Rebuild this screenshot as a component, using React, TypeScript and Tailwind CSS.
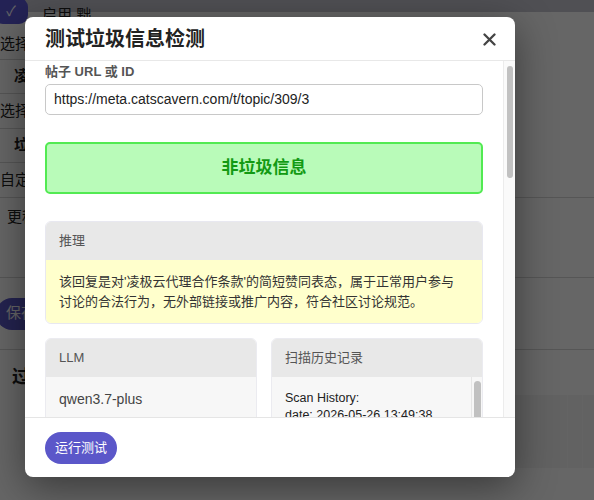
import React from "react";

const FONT = { fontFamily: '"Liberation Sans", "Noto Sans CJK SC", Arial, sans-serif' };

function Background() {
  return (
    <div className="w-[594px] h-[500px] bg-white text-[#222] text-[14px] overflow-hidden flex flex-col whitespace-nowrap">
      <div className="h-[30px] bg-[linear-gradient(#c8c9d2_0_12px,white_12px)] flex items-start">
        <div className="ml-[-6px] mt-[-2px] w-[34px] h-[26px] rounded-[9px] bg-[#5b57d8] flex items-center justify-center text-white text-[14px]">✓</div>
        <span className="ml-[14px] mt-[4px] text-[15px]">启用 黜</span>
      </div>
      <div className="h-[30px] flex items-center text-[15px] border-b border-[#d6d6d6] w-[60px] overflow-hidden">选择选择</div>
      <div className="h-[34px] flex items-center pl-[14px] font-bold text-[15px] border-b border-[#d6d6d6] w-[60px] overflow-hidden">凌极云代</div>
      <div className="h-[35px] flex items-center text-[15px] border-b border-[#d6d6d6] w-[60px] overflow-hidden">选择选择</div>
      <div className="h-[34px] flex items-center pl-[14px] font-bold text-[15px] border-b border-[#d6d6d6] w-[60px] overflow-hidden">垃圾信息</div>
      <div className="h-[35px] flex items-center text-[15px] border-b border-[#d6d6d6]">自定义</div>
      <div className="h-[80px] pl-[7px] pt-[8px] text-[15px] border-b border-[#d6d6d6]">更种</div>
      <div className="h-[72px] flex items-center border-b border-[#d6d6d6]">
        <div className="ml-[-4px] h-[32px] px-[10px] rounded-full bg-[#5b57c9] text-white text-[15px] flex items-center">保存设置</div>
      </div>
      <div className="pl-[12px] pt-[14px] font-bold text-[18px]">过滤</div>
      <div className="mt-[4px] ml-[515px] w-[79px] h-[73px] bg-[#f6f6f6] flex">
        <div className="w-[53px] border-r border-[#f9f9f9]" />
        <div className="w-[15px] border-r border-[#f9f9f9]" />
      </div>
    </div>
  );
}

function Modal() {
  return (
    <div className="absolute left-[25px] top-[17px] w-[490px] h-[460px] bg-white rounded-[8px] shadow-[0_10px_40px_rgba(0,0,0,0.45)] flex flex-col overflow-hidden">
      <div className="h-[44px] shrink-0 flex items-center justify-between pl-[20px] pr-[19px] border-b border-[#e8e8e8]">
        <span className="text-[20px] font-bold text-[#222] leading-none">测试垃圾信息检测</span>
        <svg width="13" height="13" viewBox="0 0 13 13" className="mt-[1px]">
          <path d="M1.5 1.5 L11.5 11.5 M11.5 1.5 L1.5 11.5" stroke="#444" strokeWidth="2.3" strokeLinecap="round" />
        </svg>
      </div>
      <div className="flex-1 flex overflow-hidden">
        <div className="flex-1 px-[20px] pt-[1px] overflow-hidden">
          <div className="text-[13px] font-bold text-[#555] leading-[20px]">帖子 URL 或 ID</div>
          <div className="mt-[2px] h-[31px] rounded-[5px] border border-[#c8c8c8] flex items-center px-[8px] text-[14px] text-[#222]">
            https://meta.catscavern.com/t/topic/309/3
          </div>
          <div className="mt-[27px] h-[52px] rounded-[5px] border-2 border-[#52ea52] bg-[#b9fbb9] flex items-center justify-center text-[17px] font-bold text-[#139a13]">
            非垃圾信息
          </div>
          <div className="mt-[27px] rounded-[6px] border border-[#e8e8f0] overflow-hidden">
            <div className="h-[38px] bg-[#e8e8e8] flex items-center px-[13px] text-[13px] text-[#555]">推理</div>
            <div className="bg-[#ffffcc] pl-[13px] pr-[24px] pt-[12px] pb-[11px] text-[13px] leading-[20px] text-[#333]">
              该回复是对'凌极云代理合作条款'的简短赞同表态，属于正常用户参与讨论的合法行为，无外部链接或推广内容，符合社区讨论规范。
            </div>
          </div>
          <div className="mt-[14px] grid grid-cols-2 gap-[14px]">
            <div className="rounded-[6px] border border-[#ebebf0] overflow-hidden">
              <div className="h-[38px] bg-[#e8e8e8] flex items-center px-[13px] text-[13px] text-[#555]">LLM</div>
              <div className="bg-[#f7f7f7] h-[80px] px-[13px] pt-[12px] text-[14px] leading-[20px] text-[#444]">qwen3.7-plus</div>
            </div>
            <div className="rounded-[6px] border border-[#ebebf0] overflow-hidden">
              <div className="h-[38px] bg-[#e8e8e8] flex items-center px-[13px] text-[13px] text-[#555]">扫描历史记录</div>
              <div className="bg-[#f7f7f7] h-[80px] flex">
                <div className="flex-1 px-[13px] pt-[13px] text-[12.5px] leading-[17px] text-[#222] whitespace-pre">
                  {"Scan History:\ndate: 2026-05-26 13:49:38"}
                </div>
                <div className="w-[11px] border-l border-[#e6e6e6] pt-[4px] flex justify-center">
                  <div className="w-[7px] h-[60px] rounded-full bg-[#c1c1c1]" />
                </div>
              </div>
            </div>
          </div>
        </div>
        <div className="w-[12px] shrink-0 border-l border-[#ececec] bg-[#fafafa] pt-[5px] flex justify-center">
          <div className="w-[6px] h-[112px] rounded-full bg-[#c1c1c1]" />
        </div>
      </div>
      <div className="h-[60px] shrink-0 border-t border-[#e5e5e5] flex items-center px-[20px]">
        <div className="h-[32px] px-[10px] rounded-full bg-[#5b57c9] text-white text-[13px] flex items-center">运行测试</div>
      </div>
    </div>
  );
}

export default function App() {
  return (
    <div className="relative w-[594px] h-[500px] overflow-hidden" style={FONT}>
      <Background />
      <div className="absolute inset-0 bg-black/60" />
      <Modal />
    </div>
  );
}
